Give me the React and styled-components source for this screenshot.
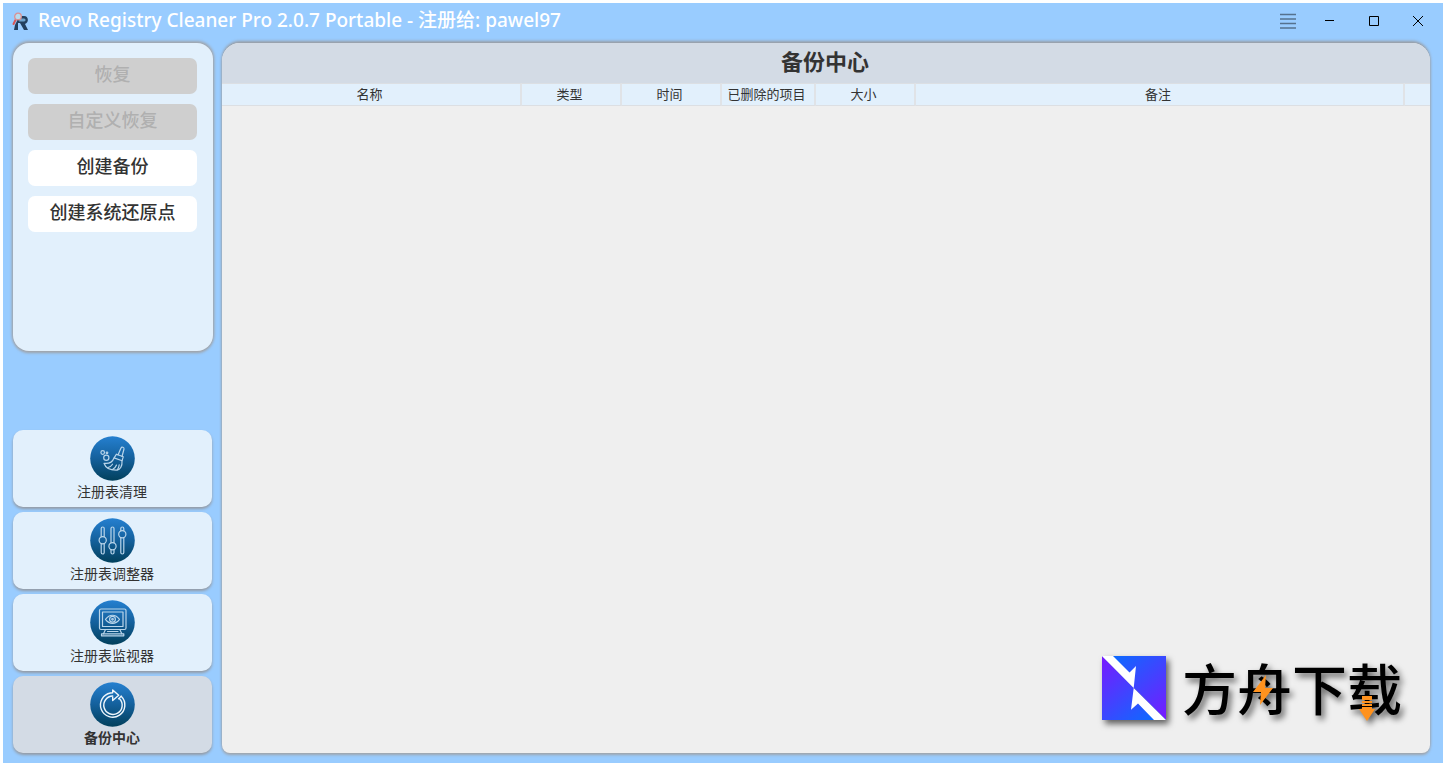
import React from 'react';
import styled, { createGlobalStyle } from 'styled-components';

const GlobalStyle = createGlobalStyle`
  * {
    box-sizing: border-box;
  }

  body {
    margin: 0;
    background-color: #ffffff;
    color: #333333;
    font-family: 'Open Sans', 'Noto Sans CJK SC', sans-serif;
  }

  button {
    font-family: inherit;
    border: none;
    cursor: pointer;
  }
`;

const Page = styled.div`
  display: flex;
  min-height: 100vh;
  padding: 3px 4px 4px 3px;
`;

const Window = styled.div`
  flex: 1;
  display: flex;
  flex-direction: column;
  min-width: 0;
  background-color: #99ccff;
`;

const TitleBar = styled.header`
  display: flex;
  align-items: center;
  gap: 9px;
  height: 40px;
  padding: 0 3px 4px 9px;
`;

const AppTitle = styled.h1`
  flex: 1;
  margin: 0;
  padding-bottom: 2px;
  color: #ffffff;
  font-family: 'Noto Sans', 'Noto Sans CJK SC', sans-serif;
  font-size: 19px;
  font-weight: 500;
  line-height: 28px;
  white-space: nowrap;
`;

const WindowControls = styled.div`
  display: flex;
`;

const ControlButton = styled.button`
  display: flex;
  align-items: center;
  justify-content: center;
  width: ${(props) => (props.$small ? '40px' : '44px')};
  height: 32px;
  padding: 0;
  background: none;
`;

const Body = styled.div`
  flex: 1;
  display: flex;
  gap: 9px;
  padding: 0 13px 10px 10px;
`;

const Sidebar = styled.aside`
  display: flex;
  flex-direction: column;
  justify-content: space-between;
  width: 200px;
`;

const ActionPanel = styled.div`
  display: flex;
  flex-direction: column;
  gap: 10px;
  min-height: 308px;
  padding: 15px 16px 15px 15px;
  border-radius: 16px;
  background-color: #e2f0fc;
  box-shadow: 0 -1px 3px 1px #a0a4aa, 0 2px 3px #a0a4aa;
`;

const ActionButton = styled.button`
  height: 36px;
  padding: 0 0 4px;
  border-radius: 7px;
  background-color: #ffffff;
  color: #333333;
  font-size: 18px;
  font-weight: 500;
  line-height: 24px;

  &:disabled {
    background-color: #cfcfcf;
    color: #b0b0b0;
    cursor: default;
  }
`;

const Nav = styled.nav`
  display: flex;
  flex-direction: column;
  gap: 5px;
  padding-right: 1px;
`;

const NavButton = styled.button`
  display: flex;
  flex-direction: column;
  align-items: center;
  gap: 1px;
  height: 77px;
  padding: 6px 1px 0 0;
  border-radius: 10px;
  background-color: ${(props) => (props.$active ? '#d3dbe5' : '#e2f0fc')};
  box-shadow: 0 2px 3px #949aa3;
  color: #333333;
  font-size: 14px;
  font-weight: ${(props) => (props.$active ? 700 : 400)};
  line-height: 20px;
`;

const Main = styled.main`
  flex: 1;
  position: relative;
  min-width: 0;
  border-radius: 18px 18px 8px 8px;
  background-color: #efefef;
  box-shadow: 0 -2px 3px #989ca2, 0 2px 3px #a0a4aa;
`;

const PanelTitle = styled.h2`
  margin: 0;
  padding: 0 2px 4px 0;
  border-radius: 18px 18px 0 0;
  background-color: #d3dbe5;
  font-size: 22px;
  font-weight: 700;
  line-height: 36px;
  text-align: center;
`;

const BackupTable = styled.table`
  width: 100%;
  table-layout: fixed;
  border-collapse: separate;
  border-spacing: 0;
`;

const HeadCell = styled.th`
  width: ${(props) => (props.$width ? `${props.$width}px` : 'auto')};
  height: 23px;
  padding: 0 3px 2px 0;
  border-top: 1px solid #dcdfe3;
  border-bottom: 1px solid #dcdfe3;
  border-right: 2px solid #e0e3e7;
  background-color: #e2f0fc;
  font-size: 13px;
  font-weight: 400;
  line-height: 18px;
  white-space: nowrap;

  &:last-child {
    border-right: none;
  }
`;

const Watermark = styled.div`
  position: absolute;
  right: 28px;
  bottom: 33px;
  display: flex;
  gap: 16px;
  filter: drop-shadow(3px 4px 3px rgba(0, 0, 0, 0.6));
`;

const Wordmark = styled.div`
  position: relative;
  color: #000000;
  font-family: 'Noto Sans CJK SC', sans-serif;
  font-size: 55px;
  font-weight: 500;
  line-height: 60px;
  white-space: nowrap;

  > svg {
    position: absolute;
    top: 0;
    left: 0;
  }
`;

const AppLogo = () => (
  <svg width="17" height="19" viewBox="0 0 17 19" aria-hidden="true">
    <path d="M4 4h8c5 0 5 7 1 8l3 6h-4l-4-7H6v7H2l1-5 2-4z" fill="#23405f" />
    <path d="M8 6.500h4c2 0 2 3 0 3H7z" fill="#6fa3cd" />
    <path d="M3.500 8l-2 4" stroke="#d85656" strokeWidth="2" strokeLinecap="round" />
    <circle cx="6" cy="4.500" r="3.300" fill="#b8dcee" stroke="#dc8f91" strokeWidth="1.300" />
  </svg>
);

const IconDisc = ({ id, children }) => (
  <svg width="45" height="45" viewBox="0 0 45 45" aria-hidden="true">
    <defs>
      <linearGradient id={id} x1="0" y1="0" x2="0" y2="1">
        <stop offset="0" stopColor="#2580d0" />
        <stop offset="0.5" stopColor="#14609c" />
        <stop offset="1" stopColor="#02405c" />
      </linearGradient>
    </defs>
    <circle cx="22.5" cy="22.5" r="22.3" fill={`url(#${id})`} />
    <g fill="none" stroke="#b9d5ea" strokeWidth="1.200" strokeLinejoin="round" strokeLinecap="round">
      {children}
    </g>
  </svg>
);

const CleanerIcon = () => (
  <IconDisc id="disc-cleaner">
    <circle cx="12.7" cy="16.5" r="1.8" />
    <circle cx="17" cy="16.8" r="0.8" />
    <circle cx="16.3" cy="21.8" r="2.6" />
    <path d="M28 19l3-7c.6-1.600 3.400-.8 3 1l-2 7.500" />
    <path d="M26.500 18.200l6.800 2.500-1.200 4-8-2.800z" />
    <path d="M24 22c-1.500 4-5 6-10 5.300 1.500 4.500 6 7 12.500 6.900 3.500 0 6-4.200 5.500-9.500" />
    <path d="M18 31.500c2-.5 3.500-1.700 4.500-3.300M22.500 33.500c2-1 3.300-2.500 4-4.500M27.300 33.800c1.200-1.300 1.700-3 1.900-5" />
  </IconDisc>
);

const TunerIcon = () => (
  <IconDisc id="disc-tuner">
    <path d="M11.200 18.600V10.500a1.500 1.500 0 0 1 3 0v8.100M11.200 25.900v8.600a1.500 1.500 0 0 0 3 0v-8.600" />
    <circle cx="12.700" cy="22.300" r="3.600" />
    <path d="M21 24.600V10.500a1.500 1.500 0 0 1 3 0v14.100M21 31.900v2.600a1.500 1.500 0 0 0 3 0v-2.600" />
    <circle cx="22.500" cy="28.300" r="3.600" />
    <path d="M30.800 12.600v-2.100a1.500 1.500 0 0 1 3 0v2.100M30.800 19.800v14.700a1.500 1.500 0 0 0 3 0V19.800" />
    <circle cx="32.300" cy="16.200" r="3.600" />
  </IconDisc>
);

const MonitorIcon = () => (
  <IconDisc id="disc-monitor">
    <rect x="9.500" y="9" width="26.500" height="20.500" rx="1.500" />
    <rect x="12.500" y="12" width="20.500" height="14.500" />
    <path d="M15.500 19.300c4-5.400 10-5.400 14 0-4 5.400-10 5.400-14 0z" />
    <circle cx="22.500" cy="19.300" r="2.900" />
    <circle cx="22.500" cy="19.300" r="0.800" />
    <path d="M15.500 29.500l-2 4.300M29.800 29.500l2 4.300M17.500 31.500h10.500" />
    <path d="M11.500 33.800h22.300v2H11.500z" />
  </IconDisc>
);

const BackupIcon = () => (
  <IconDisc id="disc-backup">
    <g stroke="#eef6fc" strokeWidth="1.400">
      <path d="M31.200 14.300A12.200 12.200 0 1 1 20.500 11l2.200-.3V8l6 5.300-6 5.200v-3.200" />
      <path d="M29.500 16.700A9.200 9.200 0 1 1 22.700 14" />
      <path d="M31.200 14.300l-2.600 2.400" />
    </g>
  </IconDisc>
);

const ArkMark = () => (
  <svg width="64" height="64" viewBox="0 0 64 64" aria-hidden="true">
    <defs>
      <linearGradient id="ark-upper" x1="0.15" y1="0" x2="1" y2="1">
        <stop offset="0" stopColor="#0a6cff" />
        <stop offset="1" stopColor="#7a18ff" />
      </linearGradient>
      <linearGradient id="ark-lower" x1="0" y1="0" x2="0.85" y2="1">
        <stop offset="0" stopColor="#7a18ff" />
        <stop offset="1" stopColor="#0a6cff" />
      </linearGradient>
    </defs>
    <path d="M0 0h64v64z" fill="url(#ark-upper)" />
    <path d="M0 0v64h64z" fill="url(#ark-lower)" />
    <path d="M0 0h11l16.500 16.500L34 10l-2.300 22z" fill="#ffffff" />
    <path d="M31.700 32L64 64H52L36 47.500l-7 6.200z" fill="#ffffff" />
  </svg>
);

const WordmarkAccents = () => (
  <svg width="220" height="68" viewBox="0 0 220 68" aria-hidden="true">
    <g fill="#ff921e">
      <path d="M84 19L71 36h8l-1 13 13-17h-8z" />
      <path d="M180 40h10v4h-10zM180 45h10v2h-10zM180 48h10v2h-10zM180 51h10v2h3l-8 12-8-12h3z" />
    </g>
  </svg>
);

const ACTIONS = [
  { label: '恢复', disabled: true },
  { label: '自定义恢复', disabled: true },
  { label: '创建备份' },
  { label: '创建系统还原点' },
];

const SECTIONS = [
  { label: '注册表清理', Icon: CleanerIcon },
  { label: '注册表调整器', Icon: TunerIcon },
  { label: '注册表监视器', Icon: MonitorIcon },
  { label: '备份中心', Icon: BackupIcon, active: true },
];

const COLUMNS = [
  { label: '名称', width: 300 },
  { label: '类型', width: 100 },
  { label: '时间', width: 100 },
  { label: '已删除的项目', width: 94 },
  { label: '大小', width: 100 },
  { label: '备注' },
  { label: '', width: 25 },
];

const Controls = () => (
  <WindowControls>
    <ControlButton $small aria-label="菜单">
      <svg width="16" height="16" viewBox="0 0 16 16">
        <path d="M0 1.500h16M0 6h16M0 10.500h16M0 15h16" stroke="#55718e" strokeWidth="1.300" />
      </svg>
    </ControlButton>
    <ControlButton aria-label="最小化">
      <svg width="10" height="10" viewBox="0 0 10 10">
        <path d="M0 4.500h9" stroke="#000000" />
      </svg>
    </ControlButton>
    <ControlButton aria-label="最大化">
      <svg width="10" height="10" viewBox="0 0 10 10">
        <path d="M.5.5h9v9h-9z" fill="none" stroke="#000000" />
      </svg>
    </ControlButton>
    <ControlButton aria-label="关闭">
      <svg width="10" height="10" viewBox="0 0 10 10">
        <path d="M0 0l10 10M10 0L0 10" stroke="#000000" />
      </svg>
    </ControlButton>
  </WindowControls>
);

const App = () => {
  return (
    <Page>
      <GlobalStyle />
      <Window>
        <TitleBar>
          <AppLogo />
          <AppTitle>Revo Registry Cleaner Pro 2.0.7 Portable - 注册给: pawel97</AppTitle>
          <Controls />
        </TitleBar>
        <Body>
          <Sidebar>
            <ActionPanel>
              {ACTIONS.map(({ label, disabled }) => (
                <ActionButton key={label} disabled={disabled}>{label}</ActionButton>
              ))}
            </ActionPanel>
            <Nav>
              {SECTIONS.map(({ label, Icon, active }) => (
                <NavButton key={label} $active={active}>
                  <Icon />
                  {label}
                </NavButton>
              ))}
            </Nav>
          </Sidebar>
          <Main>
            <PanelTitle>备份中心</PanelTitle>
            <BackupTable>
              <thead>
                <tr>
                  {COLUMNS.map(({ label, width }) => (
                    <HeadCell key={label} $width={width}>{label}</HeadCell>
                  ))}
                </tr>
              </thead>
            </BackupTable>
            <Watermark>
              <ArkMark />
              <Wordmark>
                方舟下载
                <WordmarkAccents />
              </Wordmark>
            </Watermark>
          </Main>
        </Body>
      </Window>
    </Page>
  );
};

export default App;
